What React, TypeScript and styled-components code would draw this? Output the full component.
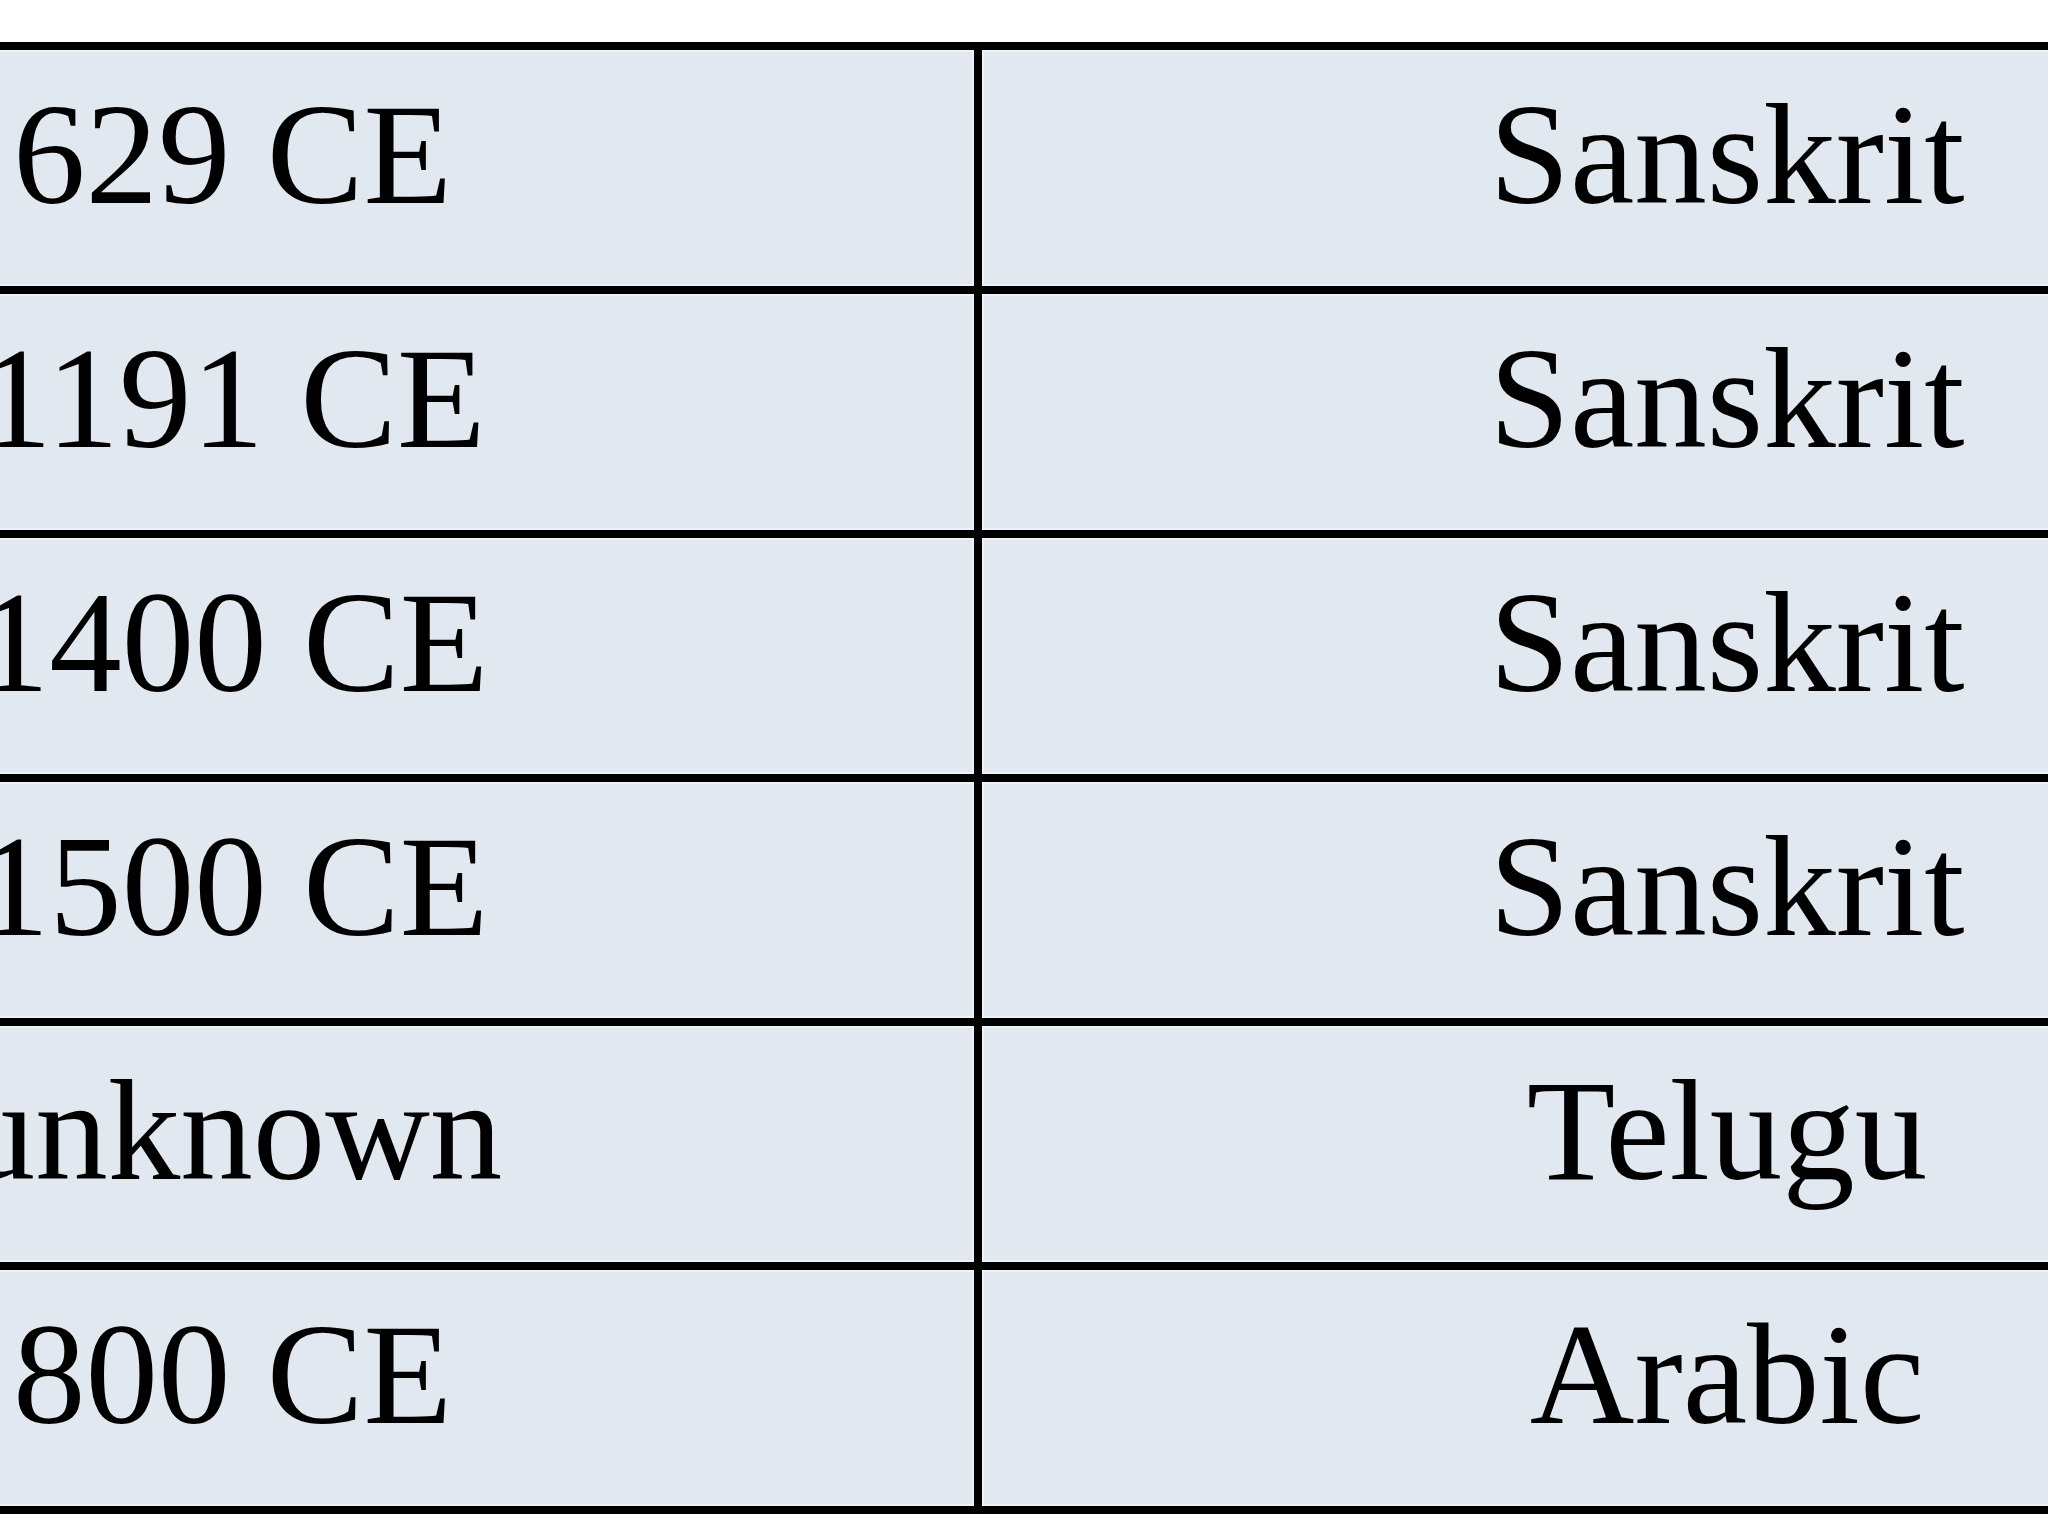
import React from "react";
import styled, { createGlobalStyle } from "styled-components";

const GlobalStyle = createGlobalStyle`
  html, body {
    margin: 0;
    padding: 0;
    background: #ffffff;
    overflow: hidden;
  }
  body {
    font-family: "Liberation Serif", "Times New Roman", serif;
  }
`;

const Page = styled.div`
  width: 2048px;
  height: 1540px;
  overflow: hidden;
  background: #ffffff;
`;

const Table = styled.div`
  display: grid;
  grid-template-columns: 1483px 1490px;
  grid-auto-rows: 236px;
  gap: 8px;
  padding: 8px;
  width: max-content;
  margin: 42px 0 0 -517px;
  background: #000000;
`;

const Cell = styled.div`
  display: flex;
  justify-content: center;
  align-items: flex-start;
  box-sizing: border-box;
  padding-top: 32px;
  background: #e2e8f0;
  box-shadow: inset 0 0 0 2px #eef2f6;
  font-family: "Liberation Serif", "Times New Roman", serif;
  font-size: 145px;
  line-height: 145px;
  color: #000000;
  white-space: nowrap;
`;

const rows: [string, string][] = [
  ["629 CE", "Sanskrit"],
  ["1191 CE", "Sanskrit"],
  ["1400 CE", "Sanskrit"],
  ["1500 CE", "Sanskrit"],
  ["unknown", "Telugu"],
  ["800 CE", "Arabic"],
];

export default function App() {
  return (
    <Page>
      <GlobalStyle />
      <Table>
        {rows.map(([date, lang], i) => (
          <React.Fragment key={i}>
            <Cell>{date}</Cell>
            <Cell>{lang}</Cell>
          </React.Fragment>
        ))}
      </Table>
    </Page>
  );
}
